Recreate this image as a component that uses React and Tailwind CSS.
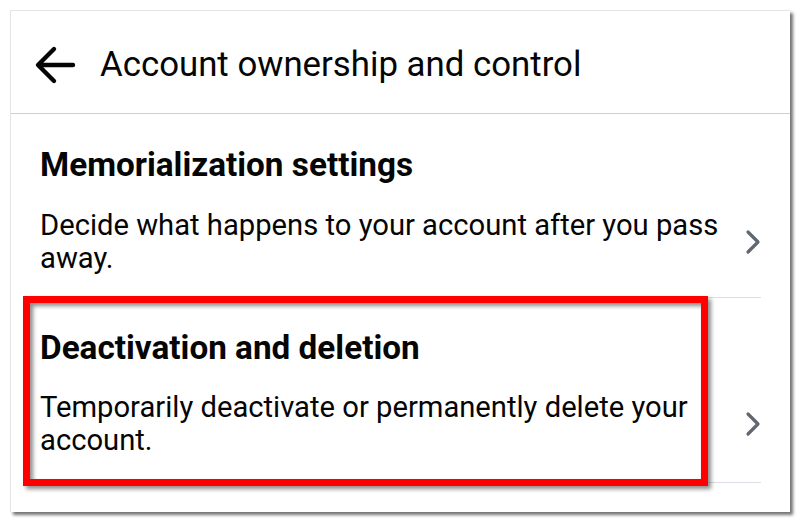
const items = [
  {
    title: "Memorialization settings",
    desc: "Decide what happens to your account after you pass away.",
    pad: "pt-[32px] pb-[22px]",
    gap: "mt-[25px]",
  },
  {
    title: "Deactivation and deletion",
    desc: "Temporarily deactivate or permanently delete your account.",
    pad: "pt-[31px] pb-[25px]",
    gap: "mt-[24px]",
  },
];

export default function App() {
  return (
    <div className="w-[800px] h-[522px] bg-white p-[10px] font-['Roboto',sans-serif] text-[#050505]">
      <div className="relative w-[780px] h-[502px] bg-white border-l border-t border-[#e4e4e4] shadow-[3px_3px_3px_rgba(0,0,0,0.55)]">
        {/* Header */}
        <div className="flex items-center h-[103px] pt-[5px] border-b border-[#ccd0d5]">
          <svg width="42" height="40" viewBox="0 0 42 40" className="ml-[23px]">
            <path
              d="M39 20H5M20 4L4 20l16 16"
              fill="none"
              stroke="#050505"
              strokeWidth="4.4"
              strokeLinecap="round"
              strokeLinejoin="round"
            />
          </svg>
          <h1 className="ml-[24px] text-[34.8px] leading-none">Account ownership and control</h1>
        </div>

        {/* Settings list */}
        {items.map((item, i) => (
          <div key={i} className="px-[29px]">
            <div className={`border-b border-[#dadde1] ${item.pad}`}>
              <h2 className="text-[33.3px] leading-[38px] font-bold">{item.title}</h2>
              <div className={`flex items-center ${item.gap}`}>
                <p className="w-[700px] text-[29.2px] leading-[33px]">{item.desc}</p>
                <svg width="16" height="26" viewBox="0 0 16 26" className="ml-auto">
                  <path
                    d="M3 3l10 10L3 23"
                    fill="none"
                    stroke="#606770"
                    strokeWidth="3.2"
                    strokeLinecap="round"
                    strokeLinejoin="round"
                  />
                </svg>
              </div>
            </div>
          </div>
        ))}

        {/* Highlight box */}
        <div className="absolute left-[12px] top-[285px] w-[685px] h-[190px] border-[7px] border-[#ff0000] drop-shadow-[3px_3px_2px_rgba(0,0,0,0.45)]" />
      </div>
    </div>
  );
}
